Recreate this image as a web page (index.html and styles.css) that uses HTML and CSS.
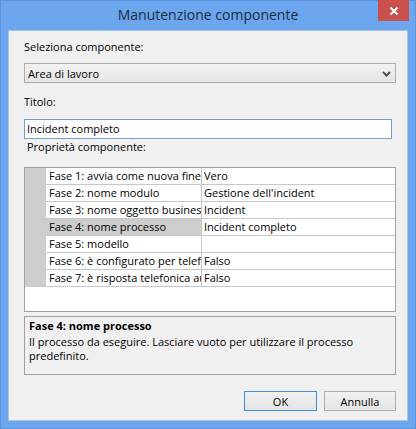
FILE: index.html
```html
<!DOCTYPE html>
<html lang="it">
<head>
<meta charset="utf-8">
<title>Manutenzione componente</title>
<link rel="stylesheet" href="styles.css">
</head>
<body>
<div class="window">
  <div class="titlebar">
    <div class="title">Manutenzione componente</div>
    <div class="close">
      <svg width="10" height="10" viewBox="0 0 10 10"><path d="M1.5 1.5 L8.5 8.5 M8.5 1.5 L1.5 8.5" stroke="#fff" stroke-width="2" fill="none"/></svg>
    </div>
  </div>
  <div class="client">
    <div class="label l-select">Seleziona componente:</div>
    <div class="select">
      <span>Area di lavoro</span>
      <svg class="chev" width="9" height="6" viewBox="0 0 9 6"><path d="M1 1 L4.5 4.5 L8 1" stroke="#505050" stroke-width="2" fill="none"/></svg>
    </div>
    <div class="label l-title">Titolo:</div>
    <div class="input">Incident completo</div>
    <div class="label l-props">Proprietà componente:</div>
    <div class="grid">
      <div class="row"><div class="gutter"></div><div class="name">Fase 1: avvia come nuova finestra</div><div class="value">Vero</div></div>
      <div class="row"><div class="gutter"></div><div class="name">Fase 2: nome modulo</div><div class="value">Gestione dell'incident</div></div>
      <div class="row"><div class="gutter"></div><div class="name">Fase 3: nome oggetto business</div><div class="value">Incident</div></div>
      <div class="row sel"><div class="gutter"></div><div class="name">Fase 4: nome processo</div><div class="value">Incident completo</div></div>
      <div class="row"><div class="gutter"></div><div class="name">Fase 5: modello</div><div class="value"></div></div>
      <div class="row"><div class="gutter"></div><div class="name">Fase 6: è configurato per telefonia</div><div class="value">Falso</div></div>
      <div class="row"><div class="gutter"></div><div class="name">Fase 7: è risposta telefonica automatica</div><div class="value">Falso</div></div>
    </div>
    <div class="desc">
      <div class="desc-title">Fase 4: nome processo</div>
      <div class="desc-text">Il processo da eseguire. Lasciare vuoto per utilizzare il processo predefinito.</div>
    </div>
    <div class="buttons">
      <div class="btn default">OK</div>
      <div class="btn">Annulla</div>
    </div>
  </div>
</div>
</body>
</html>
```
FILE: styles.css
```css
html, body {
  margin: 0;
  padding: 0;
}
body {
  width: 416px;
  height: 429px;
  overflow: hidden;
  font-family: "Open Sans", "Noto Sans", sans-serif;
  font-size: 11px;
  color: #000;
}
.window {
  box-sizing: border-box;
  width: 416px;
  height: 429px;
  background: #6ba6ef;
  border: 1px solid #5a93dc;
  display: flex;
  flex-direction: column;
}
.titlebar {
  height: 29px;
  position: relative;
  display: flex;
  align-items: center;
  justify-content: center;
}
.title {
  font-size: 14px;
  color: #1c2c40;
  margin-top: -2px;
}
.close {
  position: absolute;
  top: -1px;
  right: 6px;
  width: 31px;
  height: 21px;
  background: #c9504b;
  display: flex;
  align-items: center;
  justify-content: center;
}
.client {
  box-sizing: border-box;
  margin: 0 7px 0 7px;
  height: 391px;
  background: #f0f0f0;
  border: 1px solid #a9c4e6;
  padding: 9px 11px 0 15px;
  display: flex;
  flex-direction: column;
}
.label {
  height: 14px;
  line-height: 14px;
}
.select {
  box-sizing: border-box;
  margin-top: 9px;
  height: 20px;
  width: 372px;
  border: 1px solid #acacac;
  background: linear-gradient(#f2f2f2, #e5e5e5);
  display: flex;
  align-items: center;
  justify-content: space-between;
  padding: 0 4px 0 3px;
}
.chev {
  margin-top: 1px;
}
.l-title {
  margin-top: 12px;
}
.input {
  box-sizing: border-box;
  margin-top: 10px;
  height: 20px;
  width: 368px;
  border: 1px solid #6f9fd5;
  background: #fff;
  line-height: 18px;
  padding-left: 2px;
}
.l-props {
  margin-top: 1px;
  margin-left: 3px;
}
.grid {
  box-sizing: border-box;
  margin-top: 13px;
  width: 372px;
  height: 145px;
  border: 1px solid #a0a0a0;
  background: #fff;
  display: flex;
  flex-direction: column;
}
.row {
  display: flex;
  height: 17px;
  box-sizing: border-box;
  border-bottom: 1px solid #c8c8c8;
}
.gutter {
  width: 21px;
  flex: none;
  background: #cdcdcd;
  margin-bottom: -1px;
}
.name {
  flex: none;
  border-right: 1px solid #c8c8c8;
  padding-left: 3px;
  box-sizing: border-box;
  width: 156px;
  white-space: nowrap;
  overflow: hidden;
  line-height: 16px;
}
.sel .name {
  background: #cdcdcd;
}
.value {
  flex: 1;
  padding-left: 2px;
  line-height: 16px;
  white-space: nowrap;
  overflow: hidden;
}
.desc {
  box-sizing: border-box;
  margin-top: 4px;
  width: 372px;
  height: 59px;
  border: 1px solid #a0a0a0;
  background: #f0f0f0;
  padding: 2px 4px 0 4px;
  line-height: 14px;
}
.desc-title {
  font-weight: bold;
  margin-bottom: 2px;
}
.buttons {
  margin-top: 16px;
  display: flex;
  justify-content: flex-end;
  gap: 7px;
}
.btn {
  box-sizing: border-box;
  width: 73px;
  height: 20px;
  border: 1px solid #acacac;
  background: linear-gradient(#f0f0f0, #e5e5e5);
  display: flex;
  align-items: center;
  justify-content: center;
}
.btn + .btn {
  width: 72px;
}
.btn.default {
  border-color: #3c8ee0;
}
```
